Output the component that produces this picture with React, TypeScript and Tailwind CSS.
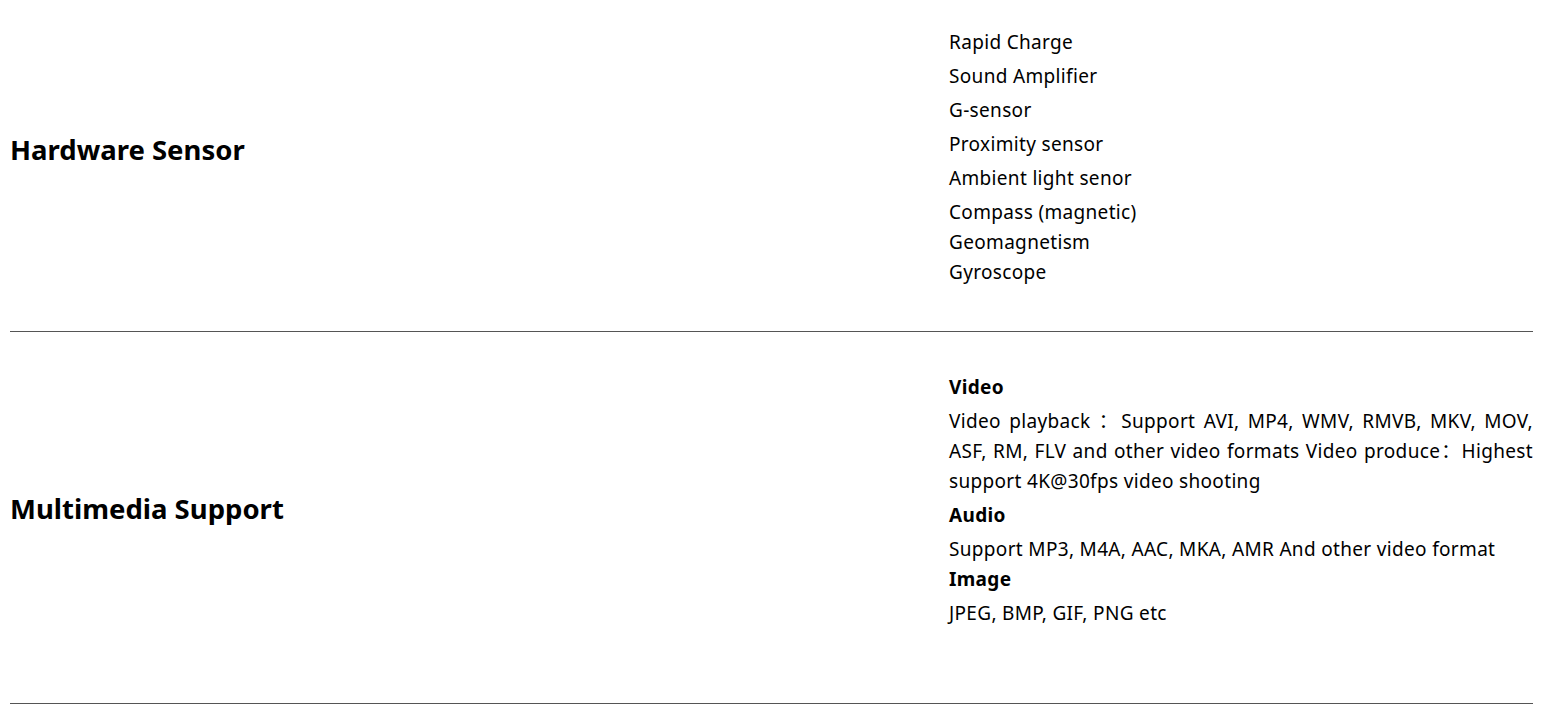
const sensors1 = ['Rapid Charge', 'Sound Amplifier', 'G-sensor', 'Proximity sensor', 'Ambient light senor']
const sensors2 = ['Compass (magnetic)', 'Geomagnetism', 'Gyroscope']

export default function App() {
  return (
    <div className="bg-white text-black pl-[10px] pr-[15px] font-['Noto_Sans','Noto_Sans_CJK_SC',sans-serif]">
      <section className="flex items-center border-b border-[#555] pt-[27px] pb-[44px]">
        <h2 className="w-[939px] shrink-0 text-[27.5px] font-bold leading-[40px] pb-[14px]">Hardware Sensor</h2>
        <div className="flex-1 text-[19px] tracking-[0.33px]">
          {sensors1.map((s) => (
            <p key={s} className="leading-[30px] mb-[4px]">{s}</p>
          ))}
          {sensors2.map((s) => (
            <p key={s} className="leading-[30px]">{s}</p>
          ))}
        </div>
      </section>
      <section className="flex items-center border-b border-[#555] pt-[40px] pb-[75px]">
        <h2 className="w-[939px] shrink-0 text-[27.5px] font-bold leading-[40px] pt-[18px]">Multimedia Support</h2>
        <div className="flex-1 text-[19px] tracking-[0.33px]">
          <h4 className="font-bold leading-[30px] mb-[4px]">Video</h4>
          <p className="leading-[30px] mb-[4px] text-justify">
            Video playback ：Support AVI, MP4, WMV, RMVB, MKV, MOV, ASF, RM, FLV and other video formats Video produce：Highest support 4K@30fps video shooting
          </p>
          <h4 className="font-bold leading-[30px] mb-[4px]">Audio</h4>
          <p className="leading-[30px]">Support MP3, M4A, AAC, MKA, AMR And other video format</p>
          <h4 className="font-bold leading-[30px] mb-[4px]">Image</h4>
          <p className="leading-[30px]">JPEG, BMP, GIF, PNG etc</p>
        </div>
      </section>
    </div>
  )
}
